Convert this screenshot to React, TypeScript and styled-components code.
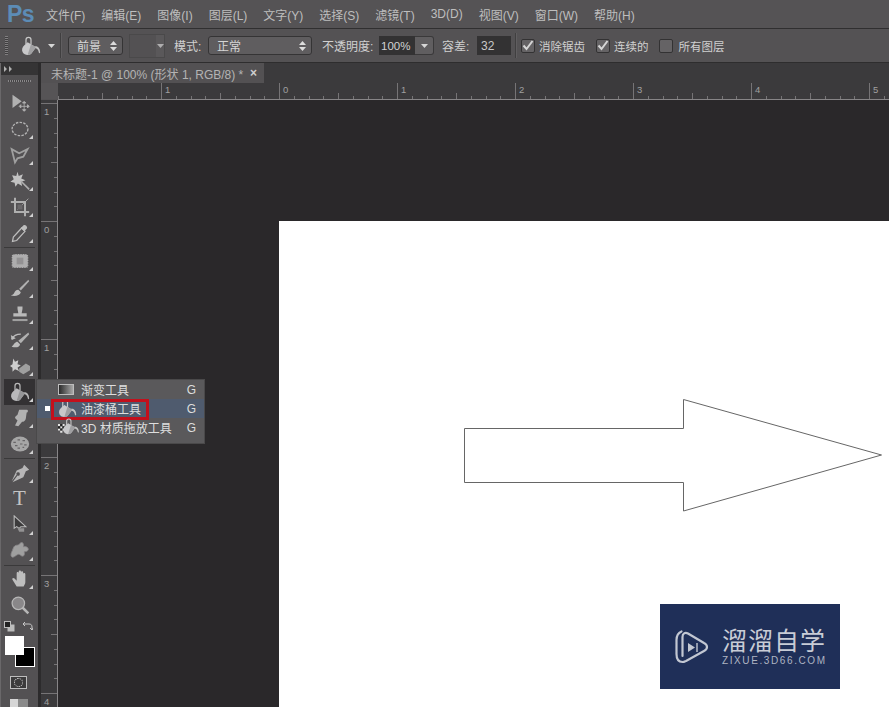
import React from 'react';
import styled, { createGlobalStyle } from 'styled-components';

const GlobalStyle = createGlobalStyle`
  html, body { margin: 0; padding: 0; background: #2a282a; }
  body { font-family: "Liberation Sans", "Noto Sans CJK SC", sans-serif; }
`;

const Root = styled.div`
  width: 889px;
  height: 707px;
  overflow: hidden;
  display: flex;
  flex-direction: column;
  background: #535153;
  color: #d4d4d4;
`;

const MenuBar = styled.div`
  height: 28px;
  display: flex;
  align-items: center;
  padding-left: 7px;
  border-bottom: 1px solid #302f30;
  background: #555355;
`;

const Logo = styled.span`
  width: 39px;
  font-size: 23px;
  font-weight: bold;
  letter-spacing: -0.5px;
  color: #5c8cb6;
`;

const MenuItem = styled.span`
  margin-right: 16px;
  font-size: 12px;
  color: #bebebe;
  white-space: nowrap;
`;

const OptionsBar = styled.div`
  height: 33px;
  display: flex;
  align-items: center;
  border-bottom: 1px solid #2e2d2e;
  background: #545254;
  font-size: 12px;
`;

const Grip = styled.div`
  width: 3px;
  height: 19px;
  margin-left: 5px;
  background: repeating-linear-gradient(#807e80 0 1px, #3f3e3f 1px 2px);
`;

const Spaced = styled.div<{ $ml: number }>`
  margin-left: ${(p) => p.$ml}px;
  display: flex;
  align-items: center;
  flex-shrink: 0;
`;

const Divider = styled.div<{ $ml: number }>`
  width: 1px;
  height: 25px;
  margin-left: ${(p) => p.$ml}px;
  background: #403f40;
  border-right: 1px solid #605e60;
`;

const Select = styled.div<{ $ml: number; $w: number }>`
  width: ${(p) => p.$w}px;
  height: 19px;
  margin-left: ${(p) => p.$ml}px;
  box-sizing: border-box;
  padding: 0 5px 0 8px;
  display: flex;
  align-items: center;
  justify-content: space-between;
  border: 1px solid #353435;
  border-radius: 3px;
  background: #5f5d5f;
  color: #d6d6d6;
  flex-shrink: 0;
`;

const Pattern = styled.div<{ $ml: number }>`
  width: 36px;
  height: 24px;
  margin-left: ${(p) => p.$ml}px;
  box-sizing: border-box;
  display: flex;
  justify-content: flex-end;
  align-items: center;
  border: 1px solid #4a494a;
  background: #535153;
  flex-shrink: 0;
`;

const PatternDrop = styled.div`
  width: 8px;
  height: 100%;
  display: flex;
  align-items: center;
  justify-content: center;
  background: #5e5c5e;
  opacity: 0.7;
`;

const Label = styled.span<{ $ml: number; $w?: number }>`
  margin-left: ${(p) => p.$ml}px;
  width: ${(p) => (p.$w ? `${p.$w}px` : 'auto')};
  color: #d0d0d0;
  white-space: nowrap;
  flex-shrink: 0;
`;

const CheckLabel = styled(Label)`
  font-size: 11.5px;
`;

const Combo = styled.div<{ $ml: number }>`
  width: 55px;
  height: 19px;
  margin-left: ${(p) => p.$ml}px;
  display: flex;
  flex-shrink: 0;
`;

const ComboValue = styled.div`
  width: 36px;
  padding-left: 2px;
  box-sizing: border-box;
  display: flex;
  align-items: center;
  background: #333233;
  color: #d2d2d2;
  font-size: 11.5px;
`;

const ComboDrop = styled.div`
  flex: 1;
  display: flex;
  align-items: center;
  justify-content: center;
  border: 1px solid #3a393a;
  border-left: 0;
  border-radius: 0 3px 3px 0;
  background: #605e60;
`;

const NumberInput = styled.div<{ $ml: number }>`
  width: 34px;
  height: 19px;
  margin-left: ${(p) => p.$ml}px;
  box-sizing: border-box;
  padding-left: 4px;
  display: flex;
  align-items: center;
  background: #333233;
  color: #c8c8c8;
  flex-shrink: 0;
`;

const CheckBox = styled.div<{ $ml: number }>`
  width: 14px;
  height: 14px;
  margin-left: ${(p) => p.$ml}px;
  box-sizing: border-box;
  display: flex;
  align-items: center;
  justify-content: center;
  border: 1px solid #333233;
  border-radius: 2px;
  background: #656365;
  flex-shrink: 0;
`;

const Workspace = styled.div`
  position: relative;
  flex: 1;
  min-height: 0;
  display: flex;
`;

const ToolPanel = styled.div`
  width: 41px;
  flex-shrink: 0;
  box-sizing: border-box;
  display: flex;
  flex-direction: column;
  align-items: stretch;
  border-left: 1px solid #6a686a;
  border-right: 3px solid #2c2b2c;
  background: #535153;
  overflow: hidden;
`;

const PanelHead = styled.div`
  height: 12px;
  padding-left: 4px;
  display: flex;
  align-items: center;
  background: #353435;
  margin-left: -1px;
`;

const PanelGrip = styled.div`
  height: 2px;
  margin: 5px 7px 7.5px;
  background: repeating-linear-gradient(90deg, #8a888a 0 1px, #444344 1px 2px);
`;

const ToolTile = styled.div<{ $active?: boolean; $corner?: boolean }>`
  position: relative;
  height: 26.2px;
  margin: 0 3px;
  display: flex;
  align-items: center;
  justify-content: center;
  background: ${(p) => (p.$active ? '#333133' : 'transparent')};
  svg {
    opacity: 0.9;
  }
  &::after {
    content: '';
    display: ${(p) => (p.$corner ? 'block' : 'none')};
    position: absolute;
    right: 2px;
    bottom: 3px;
    border-style: solid;
    border-width: 0 0 4px 4px;
    border-color: transparent transparent #d0d0d0 transparent;
  }
`;

const TextTool = styled.span`
  font-family: "Liberation Serif", serif;
  font-size: 21px;
  line-height: 1;
  color: #c4c4c4;
`;

const ToolSep = styled.div`
  height: 1px;
  margin: 0.5px 3px;
  background: #3a393a;
`;

const SwapRow = styled.div`
  height: 16px;
  padding: 0 5px 0 3px;
  display: flex;
  align-items: center;
  justify-content: space-between;
`;

const ColorWell = styled.div`
  position: relative;
  height: 32px;
  margin-top: 2px;
`;

const BackColor = styled.div`
  position: absolute;
  left: 14px;
  top: 11px;
  width: 18px;
  height: 18px;
  background: #000;
  border: 1px solid #fff;
`;

const FrontColor = styled.div`
  position: absolute;
  left: 4px;
  top: 0;
  width: 19px;
  height: 19px;
  background: #fff;
`;

const MaskButton = styled.div`
  width: 15px;
  height: 11px;
  margin: 8px 0 0 9px;
  display: flex;
  align-items: center;
  justify-content: center;
  border: 1px solid #bdbdbd;
  background: #3c3b3c;
`;

const MaskDot = styled.div`
  width: 7px;
  height: 7px;
  border: 1px dotted #e0e0e0;
  border-radius: 50%;
`;

const ScreenButton = styled.div`
  margin: 10px 0 0 9px;
  width: 18px;
  height: 8px;
  background: linear-gradient(90deg, #d6d6d6 0 45%, #8a8a8a 45%);
`;

const DocColumn = styled.div`
  flex: 1;
  min-width: 0;
  display: flex;
  flex-direction: column;
`;

const TabBar = styled.div`
  height: 20px;
  display: flex;
  background: #3b3a3c;
  flex-shrink: 0;
`;

const DocTab = styled.div`
  width: 223px;
  box-sizing: border-box;
  padding: 0 7px 0 10px;
  display: flex;
  align-items: center;
  justify-content: space-between;
  background: #535153;
  color: #b4b4b4;
  font-size: 12px;
  white-space: nowrap;
`;

const TabClose = styled.span`
  font-size: 12px;
  font-weight: bold;
  color: #cfcfcf;
`;

const TopRuler = styled.div`
  height: 17px;
  display: flex;
  flex-shrink: 0;
`;

const RulerCorner = styled.div`
  width: 17px;
  height: 16px;
  background: #565456;
  flex-shrink: 0;
`;

const CanvasRow = styled.div`
  flex: 1;
  min-height: 0;
  display: flex;
`;

const Canvas = styled.div`
  flex: 1;
  min-width: 0;
  display: flex;
  padding: 121px 0 0 221px;
  background: #2a282a;
`;

const Page = styled.div`
  position: relative;
  flex: 1;
  box-sizing: border-box;
  padding: 178px 0 0 185px;
  background: #fff;
`;

const Flyout = styled.div`
  position: absolute;
  left: 37px;
  top: 317px;
  width: 167px;
  height: 63px;
  background: #5a595b;
  box-shadow: 0 0 0 1px #4a494a;
`;

const FlyRow = styled.div<{ $active?: boolean }>`
  position: relative;
  height: 19px;
  display: flex;
  align-items: center;
  padding: 0 8px 0 21px;
  background: ${(p) => (p.$active ? '#4f5b6e' : 'transparent')};
  color: #dedede;
  font-size: 12px;
  white-space: nowrap;
`;

const FlyIcon = styled.div`
  position: relative;
  width: 23px;
  display: flex;
  align-items: center;
  flex-shrink: 0;
`;

const GradientSwatch = styled.div`
  width: 16px;
  height: 11px;
  box-sizing: border-box;
  border: 1px solid #bdbdbd;
  background: linear-gradient(90deg, #2a2a2a, #a8a8a8);
`;

const FlyName = styled.span`
  flex: 1;
`;

const Dot = styled.div`
  position: absolute;
  left: 8px;
  top: 7px;
  width: 5px;
  height: 5px;
  background: #fff;
`;

const RedBox = styled.div`
  position: absolute;
  left: 14px;
  top: 0;
  width: 98px;
  height: 21px;
  box-sizing: border-box;
  border: 3px solid #c3101c;
`;

const Watermark = styled.div`
  position: absolute;
  left: 381px;
  top: 383px;
  width: 180px;
  height: 85px;
  box-sizing: border-box;
  padding-left: 15px;
  display: flex;
  align-items: center;
  gap: 13px;
  background: #1f2f58;
`;

const MarkText = styled.div`
  display: flex;
  flex-direction: column;
  color: #c8ccd6;
`;

const MarkName = styled.span`
  font-size: 25px;
  line-height: 28px;
  letter-spacing: 1px;
  white-space: nowrap;
`;

const MarkUrl = styled.span`
  font-size: 10px;
  line-height: 12px;
  letter-spacing: 1.6px;
  white-space: nowrap;
  color: #aeb4c2;
`;

const Ico = ({ children, size = 20 }: { children: React.ReactNode; size?: number }) => (
  <svg width={size} height={size} viewBox="0 0 24 24" fill="#bcbcbc" stroke="none">
    {children}
  </svg>
);

const Caret = () => (
  <svg width="7" height="4" viewBox="0 0 7 4">
    <path d="M0 0h7L3.5 4z" fill="#d6d6d6" />
  </svg>
);

const UpDown = () => (
  <svg width="7" height="12" viewBox="0 0 7 12">
    <path d="M0 5L3.5 1 7 5zM0 7h7l-3.5 4z" fill="#dcdcdc" />
  </svg>
);

const Tick = () => (
  <svg width="12" height="11" viewBox="0 0 12 11">
    <path d="M1.5 5.5L4.5 9 10.5 1" fill="none" stroke="#d6d6d6" strokeWidth="2" />
  </svg>
);

const BucketShape = () => (
  <>
    <path d="M6 10V4.500a3 3 0 0 1 6 0V10" fill="none" stroke="#c8c8c8" strokeWidth="1.500" />
    <path d="M8 7.500L18 13.500 12 21.500C9 23.500 4 23 2 19.500 .5 16.500 1.500 13 4 11z" fill="#c8c8ca" />
    <path d="M12 9.900L18 13.500 12 21.500C11 22.200 9.500 22.600 8 22.600z" fill="#a0a0a2" />
    <path d="M17 12C20.500 12.500 23 15 23 19.500 23 21 21.500 21 21.300 19.500 21 17.500 20 15.500 17.500 14.800z" fill="#c2c2c2" />
  </>
);

const Bucket = ({ size = 20 }: { size?: number }) => (
  <Ico size={size}>
    <BucketShape />
  </Ico>
);

const Bucket3D = () => (
  <Ico size={21}>
    <path d="M0 8h2.500v2.500H0zM5 8h2.500v2.500H5zM2.500 10.500H5V13H2.500zM0 13h2.500v2.500H0zM5 13h2.500v2.500H5zM2.500 15.500H5V18H2.500z" fill="#e4e4e4" />
    <path d="M2.500 8H5v2.500H2.500zM0 10.500h2.500V13H0zM5 10.500h2.500V13H5zM2.500 13H5v2.500H2.500z" fill="#222" />
    <g transform="translate(5 1) scale(0.82)">
      <BucketShape />
    </g>
  </Ico>
);

const toolIcons: Record<string, React.ReactNode> = {
  move: (
    <Ico>
      <path d="M3 2l11 8-11 8z" />
      <path d="M17 11v10M12 16h10M17 10l-2 2h4zM17 22l-2-2h4zM11 16l2-2v4zM23 16l-2-2v4z" stroke="#bcbcbc" strokeWidth="1" />
    </Ico>
  ),
  marquee: (
    <Ico>
      <ellipse cx="12" cy="12" rx="9.500" ry="8" fill="none" stroke="#bebebe" strokeWidth="1.600" strokeDasharray="3 1.500" />
    </Ico>
  ),
  lasso: (
    <Ico>
      <path d="M2 5l9 5 10-5-5 9-7 2-3 5z" fill="none" stroke="#a8a8a8" strokeWidth="2.200" />
    </Ico>
  ),
  wand: (
    <Ico>
      <path d="M9 1l1.500 5 5-2-2 5 5 2-5 2 1 5-5-3-3 4-1-5-5-1 4-3-2-5 5 1z" fill="#cfcfcf" />
      <path d="M13 12l10 10" stroke="#b8b8b8" strokeWidth="2" />
    </Ico>
  ),
  crop: (
    <Ico>
      <path d="M6 1v17h17M1 6h17v17" fill="none" stroke="#bababa" strokeWidth="2.400" />
      <path d="M9 15L22 2" stroke="#bababa" strokeWidth="1" />
      <rect x="9" y="9" width="6" height="6" fill="#6d6b6d" />
    </Ico>
  ),
  dropper: (
    <Ico>
      <path d="M14 6l4 4-10 11-5 1 1-5z" fill="none" stroke="#cacaca" strokeWidth="1.500" />
      <path d="M13 6l3-3c2-2 6 2 4 4l-3 3z" fill="#cacaca" />
    </Ico>
  ),
  heal: (
    <Ico>
      <rect x="2" y="3.500" width="20" height="17" rx="3" fill="#b8b8b8" />
      <rect x="2" y="3.500" width="20" height="17" rx="3" fill="none" stroke="#535153" strokeWidth="1.400" strokeDasharray="1.500 1.500" />
      <rect x="8" y="8" width="8" height="8" fill="#9a989a" />
    </Ico>
  ),
  brush: (
    <Ico>
      <path d="M22 2L11 13l2 2L23 4z" />
      <path d="M10 14c-3 0-4 2-5 4-.5 1.500-2 2.500-4 3 5 1.500 11 0 12-4z" fill="#c8c8c8" />
    </Ico>
  ),
  stamp: (
    <Ico>
      <path d="M9 3h6v3l-1 5h6v4H4v-4h6L9 6z" fill="#c6c6c6" />
      <rect x="3" y="18" width="18" height="2.500" fill="#a8a8a8" />
    </Ico>
  ),
  history: (
    <Ico>
      <path d="M22 3L10 13l3 3L23 5z" />
      <path d="M9 14c-3 0-4 3-7 6 6 2 10 0 10-3z" fill="#c8c8c8" />
      <path d="M2 11c2-4 6-6 11-6" fill="none" stroke="#c8c8c8" strokeWidth="1.600" />
      <path d="M1 6l1 6 5-2z" fill="#c8c8c8" />
    </Ico>
  ),
  eraser: (
    <Ico>
      <path d="M4 3l2 4 4-2-1 5 4 1-4 3 2 4-5-2-3 3v-5l-3-2 3-2z" fill="#dcdcdc" />
      <path d="M11 15l8-6 5 3v5l-8 5-5-3z" fill="#a8a8a8" />
    </Ico>
  ),
  bucket: <Bucket />,
  smudge: (
    <Ico>
      <path d="M11 2h9c2 0 2 3 0 3.500l-1 7c-.5 3-2.500 4-4.500 4L10 22l-4-1 3-6-3-3c0-2 2-3 3-4z" />
    </Ico>
  ),
  sponge: (
    <Ico>
      <ellipse cx="12" cy="12" rx="11" ry="9" fill="#b0b0b0" />
      <path d="M4 10h3M9 7h3M15 8h3M6 14h3M12 12h3M17 13h3M9 17h3M15 16h2" stroke="#6a686a" strokeWidth="1.400" />
    </Ico>
  ),
  pen: (
    <Ico>
      <path d="M17 2l6 6-4 2-3 7-13 6 6-8a2 2 0 1 0-1-1l-6 8 6-13 7-3z" fill="#c2c2c2" />
    </Ico>
  ),
  path: (
    <Ico>
      <path d="M5 1l14 13h-6l-2 2-3-2-3 2z" fill="#3a393a" stroke="#c8c8c8" strokeWidth="1.300" />
      <path d="M9 16h8v4h-6z" fill="#9a9a9a" />
    </Ico>
  ),
  shape: (
    <Ico>
      <path d="M13 2c3-1 4 3 3 5 2-1 6 0 6 3 0 2-3 3-5 3 1 3 0 6-3 5-2-1-2-2-4-2-3 1-6 5-8 3s0-6 1-8c1-3 2-6 5-6 2 0 3-1 5-3z" fill="#a8a8a8" stroke="#8a888a" strokeWidth="1" />
    </Ico>
  ),
  hand: (
    <Ico>
      <path d="M6 21L1 13c-1-2 1-3 2.500-1.500L6 14V5c0-1.800 2.500-1.800 2.500 0v5-7c0-1.800 2.700-1.800 2.700 0v7-6c0-1.800 2.600-1.800 2.600 0v6-4c0-1.800 2.600-1.800 2.600 0v10c0 2-1 3-2 5z" fill="#cacaca" transform="translate(2 0)" />
    </Ico>
  ),
  zoom: (
    <Ico>
      <circle cx="10" cy="10" r="7.500" fill="#8f8d8f" stroke="#c2c2c2" strokeWidth="1.500" />
      <path d="M15 15l7 7" stroke="#c2c2c2" strokeWidth="3" />
    </Ico>
  ),
};

const menuItems = ['文件(F)', '编辑(E)', '图像(I)', '图层(L)', '文字(Y)', '选择(S)', '滤镜(T)', '3D(D)', '视图(V)', '窗口(W)', '帮助(H)'];

const toolGroups = [
  ['move', 'marquee', 'lasso', 'wand', 'crop', 'dropper'],
  ['heal', 'brush', 'stamp', 'history', 'eraser', 'bucket', 'smudge', 'sponge'],
  ['pen', 'text', 'path', 'shape'],
  ['hand', 'zoom'],
];

const noCorner = ['move', 'zoom', 'text'];

// both rulers share one scale: 118px per unit, zero at the page corner
const UNIT = 118;
const SUBS = 8;

const HorizontalRuler = () => {
  const zero = 279 - 58;
  const ticks: React.ReactNode[] = [];
  for (let i = -16; i < 60; i++) {
    const x = Math.round(zero + (i * UNIT) / SUBS) + 0.5;
    if (x < 0 || x > 840) continue;
    const major = i % SUBS === 0;
    const mid = i % (SUBS / 2) === 0;
    ticks.push(<line key={i} x1={x} x2={x} y1={major ? 0 : mid ? 10 : 13} y2={16} stroke="#767476" />);
    if (major) {
      ticks.push(
        <text key={`t${i}`} x={x + 3.5} y={10} fontSize="9.500" fill="#a0a0a0" fontFamily="Liberation Sans, sans-serif">
          {Math.abs(i / SUBS)}
        </text>
      );
    }
  }
  return (
    <svg width="831" height="17" style={{ flexShrink: 0, background: '#3b3a3c' }}>
      {ticks}
      <line x1="0" x2="831" y1="16.500" y2="16.500" stroke="#878587" />
    </svg>
  );
};

const VerticalRuler = () => {
  const zero = 221 - 100;
  const ticks: React.ReactNode[] = [];
  for (let i = -8; i < 40; i++) {
    const y = Math.round(zero + (i * UNIT) / SUBS) + 0.5;
    if (y < 0 || y > 610) continue;
    const major = i % SUBS === 0;
    const mid = i % (SUBS / 2) === 0;
    ticks.push(<line key={i} y1={y} y2={y} x1={major ? 0 : mid ? 10 : 13} x2={16} stroke="#767476" />);
    if (major) {
      ticks.push(
        <text key={`t${i}`} x={3} y={y + 11} fontSize="9.500" fill="#a0a0a0" fontFamily="Liberation Sans, sans-serif">
          {Math.abs(i / SUBS)}
        </text>
      );
    }
  }
  return (
    <svg width="17" height="607" style={{ flexShrink: 0, background: '#3b3a3c' }}>
      {ticks}
      <line y1="0" y2="607" x1="16.500" x2="16.500" stroke="#878587" />
    </svg>
  );
};

const WatermarkLogo = () => (
  <svg width="34" height="34" viewBox="0 0 34 34" fill="none" stroke="#c2c7d2" strokeWidth="2.200" style={{ flexShrink: 0 }}>
    <path d="M6.500 1.500C3 3 1.500 6 1.500 10v14c0 5 2 8 6 8 2 0 3-1 3.500-1L29 21c4-2 4-6 0-8L13 3.500C10 2 7.500 3.500 7.500 7v19" strokeLinejoin="round" strokeLinecap="round" />
    <path d="M13 13l7 4.500-7 4.500z" fill="#c2c7d2" stroke="none" />
    <path d="M22 13v9" strokeWidth="1.400" />
  </svg>
);

const App = () => {
  return (
    <Root>
      <GlobalStyle />
      <MenuBar>
        <Logo>Ps</Logo>
        {menuItems.map((m) => (
          <MenuItem key={m}>{m}</MenuItem>
        ))}
      </MenuBar>
      <OptionsBar>
        <Grip />
        <Spaced $ml={13}>
          <Bucket size={20} />
        </Spaced>
        <Spaced $ml={7}>
          <Caret />
        </Spaced>
        <Divider $ml={5} />
        <Select $ml={6} $w={55}>
          前景
          <UpDown />
        </Select>
        <Pattern $ml={6}>
          <PatternDrop>
            <Caret />
          </PatternDrop>
        </Pattern>
        <Label $ml={9} $w={28}>模式:</Label>
        <Select $ml={6} $w={104}>
          正常
          <UpDown />
        </Select>
        <Label $ml={10} $w={54}>不透明度:</Label>
        <Combo $ml={3}>
          <ComboValue>100%</ComboValue>
          <ComboDrop>
            <Caret />
          </ComboDrop>
        </Combo>
        <Label $ml={8} $w={29}>容差:</Label>
        <NumberInput $ml={6}>32</NumberInput>
        <Divider $ml={4} />
        <CheckBox $ml={4}>
          <Tick />
        </CheckBox>
        <CheckLabel $ml={4}>消除锯齿</CheckLabel>
        <CheckBox $ml={11}>
          <Tick />
        </CheckBox>
        <CheckLabel $ml={4}>连续的</CheckLabel>
        <CheckBox $ml={10} />
        <CheckLabel $ml={6}>所有图层</CheckLabel>
      </OptionsBar>
      <Workspace>
        <ToolPanel>
          <PanelHead>
            <svg width="10" height="6" viewBox="0 0 10 6">
              <path d="M0 0l3 3-3 3zM5 0l3 3-3 3z" fill="#b0b0b0" />
            </svg>
          </PanelHead>
          <PanelGrip />
          {toolGroups.map((group, g) => (
            <React.Fragment key={g}>
              {g > 0 && <ToolSep />}
              {group.map((tool) => (
                <ToolTile key={tool} $active={tool === 'bucket'} $corner={!noCorner.includes(tool)}>
                  {tool === 'text' ? <TextTool>T</TextTool> : toolIcons[tool]}
                </ToolTile>
              ))}
            </React.Fragment>
          ))}
          <SwapRow>
            <svg width="11" height="11" viewBox="0 0 11 11">
              <rect x="3.500" y="3.500" width="7" height="7" fill="#bcbcbc" />
              <rect x="0.500" y="0.500" width="6" height="6" fill="#222" stroke="#bcbcbc" />
            </svg>
            <svg width="11" height="11" viewBox="0 0 11 11" fill="none" stroke="#c8c8c8">
              <path d="M1 3h6c2 0 3 1 3 3v3M3 1L1 3l2 2M8 7l2 2 1-2" />
            </svg>
          </SwapRow>
          <ColorWell>
            <BackColor />
            <FrontColor />
          </ColorWell>
          <MaskButton>
            <MaskDot />
          </MaskButton>
          <ScreenButton />
        </ToolPanel>
        <DocColumn>
          <TabBar>
            <DocTab>
              未标题-1 @ 100% (形状 1, RGB/8) *
              <TabClose>×</TabClose>
            </DocTab>
          </TabBar>
          <TopRuler>
            <RulerCorner />
            <HorizontalRuler />
          </TopRuler>
          <CanvasRow>
            <VerticalRuler />
            <Canvas>
              <Page>
                <svg width="420" height="114" viewBox="0 0 420 114" fill="none" stroke="#666" style={{ display: 'block' }}>
                  <path d="M0.500 29.500H219.500V0.500L417.500 56 219.500 112V83.500H0.500Z" />
                </svg>
                <Watermark>
                  <WatermarkLogo />
                  <MarkText>
                    <MarkName>溜溜自学</MarkName>
                    <MarkUrl>ZIXUE.3D66.COM</MarkUrl>
                  </MarkText>
                </Watermark>
              </Page>
            </Canvas>
          </CanvasRow>
        </DocColumn>
        <Flyout>
          <FlyRow>
            <FlyIcon>
              <GradientSwatch />
            </FlyIcon>
            <FlyName>渐变工具</FlyName>G
          </FlyRow>
          <FlyRow $active>
            <Dot />
            <FlyIcon>
              <Bucket size={19} />
            </FlyIcon>
            <FlyName>油漆桶工具</FlyName>G
            <RedBox />
          </FlyRow>
          <FlyRow>
            <FlyIcon>
              <Bucket3D />
            </FlyIcon>
            <FlyName>3D 材质拖放工具</FlyName>G
          </FlyRow>
        </Flyout>
      </Workspace>
    </Root>
  );
};

export default App;
